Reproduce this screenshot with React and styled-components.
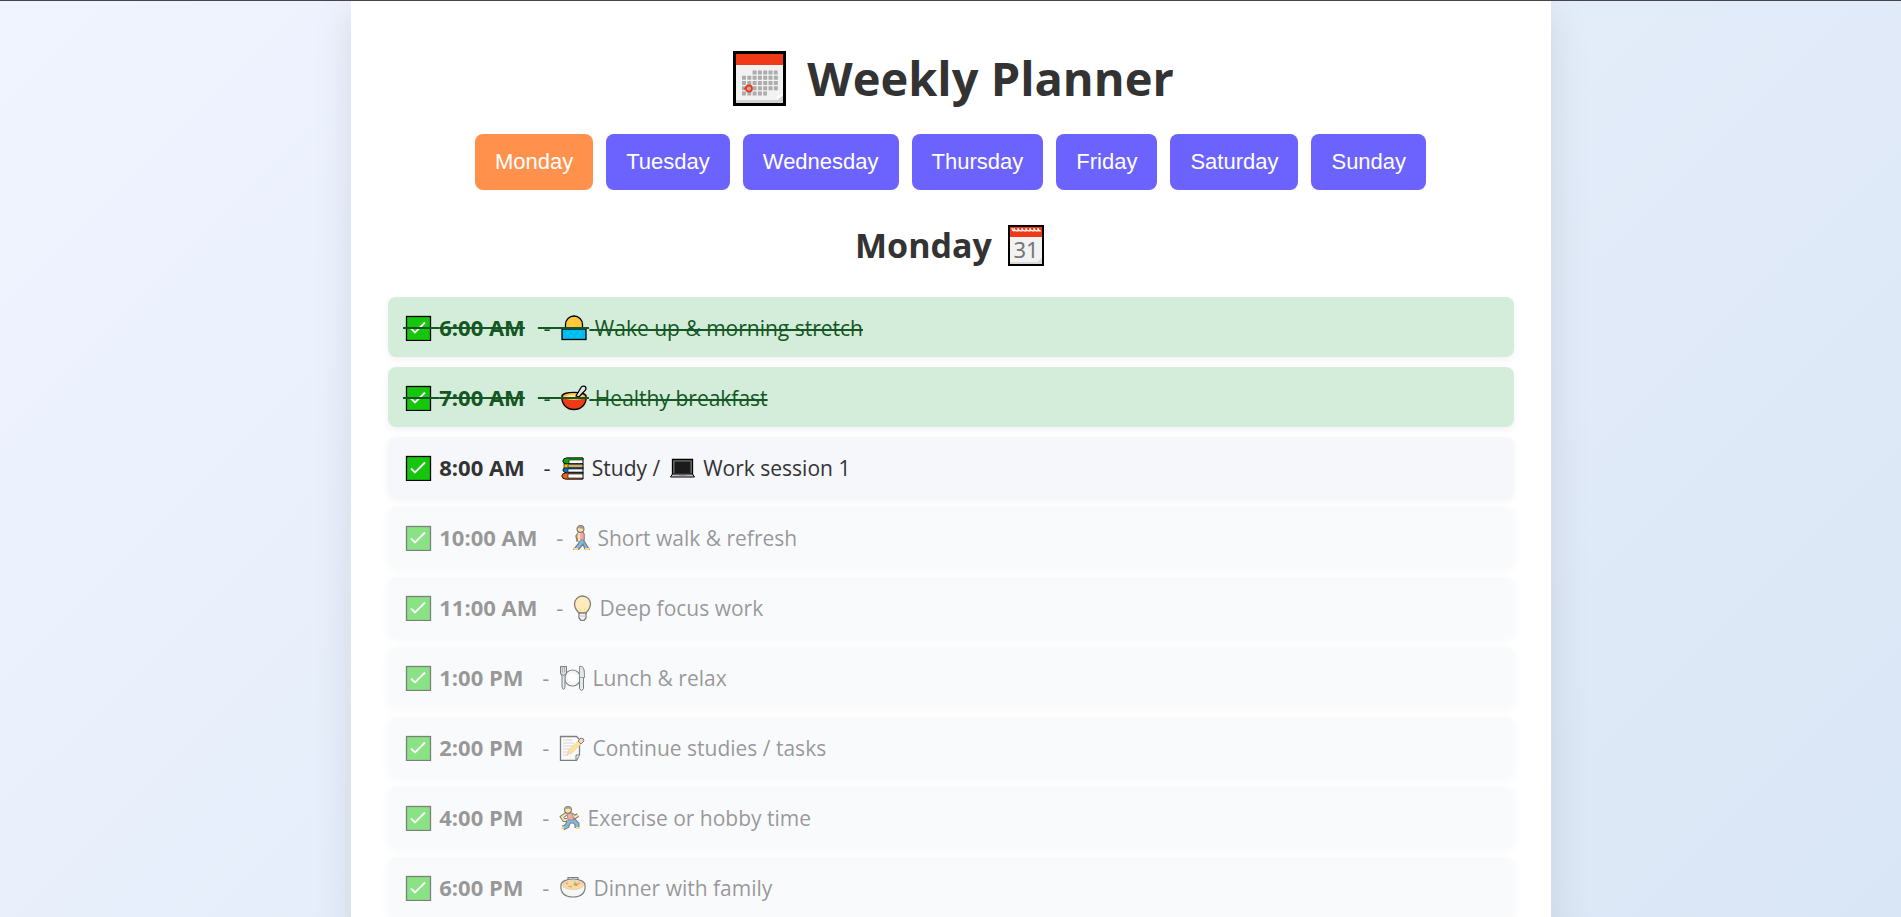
import React, { useState } from 'react'
import styled, { createGlobalStyle } from 'styled-components'

const days = ['Monday', 'Tuesday', 'Wednesday', 'Thursday', 'Friday', 'Saturday', 'Sunday']

const tasks = [
  { time: '6:00 AM', parts: [{ icon: 'sunrise', text: 'Wake up & morning stretch' }], status: 'done' },
  { time: '7:00 AM', parts: [{ icon: 'bowl', text: 'Healthy breakfast' }], status: 'done' },
  { time: '8:00 AM', parts: [{ icon: 'books', text: 'Study /' }, { icon: 'laptop', text: 'Work session 1' }], status: 'current' },
  { time: '10:00 AM', parts: [{ icon: 'walk', text: 'Short walk & refresh' }], status: 'locked' },
  { time: '11:00 AM', parts: [{ icon: 'bulb', text: 'Deep focus work' }], status: 'locked' },
  { time: '1:00 PM', parts: [{ icon: 'plate', text: 'Lunch & relax' }], status: 'locked' },
  { time: '2:00 PM', parts: [{ icon: 'memo', text: 'Continue studies / tasks' }], status: 'locked' },
  { time: '4:00 PM', parts: [{ icon: 'run', text: 'Exercise or hobby time' }], status: 'locked' },
  { time: '6:00 PM', parts: [{ icon: 'stew', text: 'Dinner with family' }], status: 'locked' },
]

const icons = {
  check: {
    width: 31,
    art: (
      <>
        <rect x="3.5" y="1.5" width="24" height="24" fill="#16c60c" stroke="#000" strokeWidth="1.3" />
        <path d="M8 13.5l4 4L22 7.5" fill="none" stroke="#fff" strokeWidth="1.8" />
      </>
    ),
  },
  sunrise: {
    width: 30,
    art: (
      <>
        <path d="M6.500 14V9.500a8.500 8.500 0 0 1 17 0V14z" fill="#ffc83d" stroke="#000" strokeWidth="1.3" />
        <rect x="3" y="14" width="24" height="10.500" fill="#00bcf2" stroke="#000" strokeWidth="1.3" />
        <path d="M8 18h2M14 17h2M20 18h2M11 21h2M18 21h2" stroke="#31d2f7" />
      </>
    ),
  },
  bowl: {
    width: 30,
    art: (
      <>
        <path d="M3 10.500c-1 8 4 14 12 14s13-6 12-14c-3-4-21-4-24 0z" fill="#f03a17" stroke="#000" strokeWidth="1.3" />
        <ellipse cx="15" cy="11.500" rx="11" ry="3.500" fill="#f9c23c" />
        <path d="M6 12c4-3 14-3 18 0-4 3-14 3-18 0z" fill="#ffe9a8" />
        <path d="M17 11l5-8.500c1-2 5-2 5 1 0 2-2 3-3 4l-4 4.500z" fill="#e6e6e6" stroke="#000" strokeWidth="1.3" />
      </>
    ),
  },
  books: {
    width: 27,
    art: (
      <>
        <path d="M24 3H8Q4 3 4 6t3 3h17zM24 9H7v4h17zM24 13H7Q4 13 4 15t4 3h16zM24 18H7Q3 18 3 21t4 3h17z" fill="#fff" stroke="#000" />
        <path d="M24 3H8Q4 3 4 6t4 3h2V5h14z" fill="#16a50c" stroke="#000" strokeWidth=".6" />
        <path d="M24 9H5v4h19v-1H9v-2h15z" fill="#fcb900" stroke="#000" strokeWidth=".6" />
        <path d="M24 13H7Q4 13 4 15t4 3h16v-1H9v-3h15z" fill="#0078d7" stroke="#000" strokeWidth=".6" />
        <path d="M24 18H7Q3 18 3 21t4 3h17v-1H9v-4h15z" fill="#f7630c" stroke="#000" strokeWidth=".6" />
      </>
    ),
  },
  laptop: {
    width: 32,
    art: (
      <>
        <path d="M6.500 4.500h20v15h-20z" fill="#767676" stroke="#000" strokeWidth="1.3" />
        <rect x="8.500" y="6.500" width="16" height="11.500" fill="#1b1b1b" />
        <path d="M6.500 19h20l2 3H4.500z" fill="#bebebe" stroke="#000" />
        <path d="M13 21h7" stroke="#777" />
      </>
    ),
  },
  walk: {
    width: 20,
    art: (
      <>
        <path d="M7 7l-3 4 1 5 2-1v3l-5 6h5l4-5 2 5h4l-5-8V9L10 6z" fill="#0078d7" stroke="#000" strokeWidth="1.300" />
        <path d="M7 7L4 11l2 4h6V9l-2-3z" fill="#ef5350" stroke="#000" strokeWidth=".7" />
        <path d="M7 8v8" stroke="#ffc83d" strokeWidth="2" />
        <circle cx="8.500" cy="4" r="3.400" fill="#ffc83d" stroke="#000" strokeWidth="1.300" />
        <path d="M5.500 3c1-3 6-3 6 1-2 0-3-1-6-1z" fill="#593a2b" />
        <path d="M2 24h4M13 24h4" stroke="#ffb900" strokeWidth="2" />
      </>
    ),
  },
  bulb: {
    width: 22,
    art: (
      <>
        <path d="M7 18C3 14 2.500 12 2.500 9a8 8 0 0 1 16 0c0 3-1 5-4.500 9z" fill="#ffd679" stroke="#000" strokeWidth="1.3" />
        <path d="M8 13l1 5h3l1-5" fill="none" stroke="#fcb900" />
        <path d="M7 18h7v5l-2 2.500H9L7 23z" fill="#e6e6e6" stroke="#000" strokeWidth="1.3" />
        <path d="M7 21h7" stroke="#888" />
      </>
    ),
  },
  plate: {
    width: 29,
    art: (
      <>
        <circle cx="14.500" cy="13" r="8" fill="#f2f2f2" stroke="#000" strokeWidth="1.2" />
        <circle cx="14.500" cy="13" r="5.500" fill="#fff" stroke="#ddd" strokeWidth=".7" />
        <path d="M2.500 1.500h6v7L7 11v11q-1.500 5-3 0V11L2.500 8.500z" fill="#b9d9eb" stroke="#000" />
        <path d="M2.500 1.500h6v7l-3 2-3-2z" fill="#bbb" stroke="#000" />
        <path d="M4.500 1.500v6M6.500 1.500v6" stroke="#444" strokeWidth=".7" />
        <path d="M21.500 1.500c4-1 5 3 5 11h-1v11q-2 4-4 0z" fill="#b9d9eb" stroke="#000" />
        <path d="M21.500 1.500c4-1 5 3 5 11h-5z" fill="#ccc" stroke="#000" strokeWidth=".7" />
      </>
    ),
  },
  memo: {
    width: 29,
    art: (
      <>
        <path d="M2.500 1.500h16l3 3v15l-3 6h-16z" fill="#f7f7f7" stroke="#000" strokeWidth="1.300" />
        <path d="M5 5h9M5 8h11M5 11h11M5 14h9M5 17h7M5 20h5" stroke="#aaa" />
        <path d="M18 25v-5h3.500" fill="#ddd" stroke="#000" />
        <path d="M9 20l2-5L22 4l3 3-11 11z" fill="#ffc83d" stroke="#d58a20" strokeWidth=".5" />
        <path d="M20 6l3-3q3 0 3 3l-3 3z" fill="#f5a9a0" stroke="#000" />
      </>
    ),
  },
  run: {
    width: 24,
    art: (
      <>
        <path d="M13 9l4 3 3-2M8 9l-4 3 2 3h3" fill="none" stroke="#000" strokeWidth="4" />
        <path d="M13 9l4 3 3-2M8 9l-4 3 2 3h3" fill="none" stroke="#ffc83d" strokeWidth="2" />
        <path d="M10 16h6l3 3v4M11 16l-2 5-4 2" fill="none" stroke="#000" strokeWidth="5" />
        <path d="M10 16h6l3 3v4M11 16l-2 5-4 2" fill="none" stroke="#0078d7" strokeWidth="2.800" />
        <path d="M9 8h5l2 7h-6z" fill="#ef5350" stroke="#000" strokeWidth=".7" />
        <circle cx="10" cy="5" r="3.400" fill="#ffc83d" stroke="#000" strokeWidth="1.2" />
        <path d="M6.500 4.500c0-4.500 7-4.500 7 0L10 3.500z" fill="#593a2b" />
        <path d="M3 24l3-2M18 23h4" stroke="#ffb900" strokeWidth="2" />
      </>
    ),
  },
  stew: {
    width: 30,
    art: (
      <>
        <path d="M10 5V2.500h10V5" fill="#ccc" stroke="#000" strokeWidth="1.200" />
        <path d="M3 10c-1 8 4 12 12 12s13-4 12-12c0-3-5-6-12-6S3 7 3 10z" fill="#eee" stroke="#000" strokeWidth="1.200" />
        <ellipse cx="15" cy="10" rx="10.500" ry="4.500" fill="#fcb93e" stroke="#b87518" strokeWidth=".5" />
        <path d="M8 9l2-1M12 12l2-1M20 8l2 1" stroke="#f03a17" strokeWidth="1.500" />
        <path d="M15 9q4-3 5 1-2 3-5-1z" fill="#7a4b1e" />
        <path d="M10 11l2 1M16 7h2" stroke="#16a50c" />
      </>
    ),
  },
}

// lead is blank space on the left that the strike line still crosses
const Icon = ({ name, struck, lead = 0 }) => {
  const { width, art } = icons[name]
  return (
    <Glyph width={width + lead} height="26" viewBox={`${-lead} 0 ${width + lead} 26`} aria-hidden="true">
      {art}
      {struck && <path d={`M${-lead} 13H${width}`} stroke="#155724" strokeWidth="2" />}
    </Glyph>
  )
}

const MonthCalendar = () => (
  <svg width="60" height="55" viewBox="-6 0 60 55" aria-hidden="true">
    <rect x="1.500" y="1.500" width="50" height="52" fill="#f2f2f2" stroke="#000" strokeWidth="3" />
    <path d="M3 3h47v11H3z" fill="#f03a17" />
    <path d="M3 49h42l5-5v8H3z" fill="#d2d2d2" />
    <path d="M44 49l6-5v-1l-6 2z" fill="#fff" />
    <path
      d="M19.600 21.500h25M9 26.800h36M9 32h36M9 37.200h36M9 42.500h25"
      stroke="#acacac"
      strokeWidth="4"
      strokeDasharray="4 1.300"
    />
    <circle cx="16" cy="37.500" r="3" fill="none" stroke="#f03a17" strokeWidth="1.800" />
    <path d="M11 38l4-3" stroke="#f03a17" strokeWidth="1.500" />
  </svg>
)

const DayCalendar = () => (
  <svg width="38" height="41" viewBox="0 0 38 41" aria-hidden="true">
    <rect x="1" y="1" width="34" height="39" fill="#f2f2f2" stroke="#000" strokeWidth="2" />
    <path d="M2 2h32v10H2z" fill="#f03a17" />
    <path d="M4 3q0 3 2 3V3q0 3 4 3V3q0 3 4 3V3q0 3 4 3V3q0 3 4 3V3q0 3 4 3V3q0 3 4 3V3q0 3 3 3" fill="none" stroke="#fff" strokeWidth="1.200" />
    <path d="M2 37h27l5-4v6H2z" fill="#d8d8d8" />
    <text x="18" y="33" textAnchor="middle" fill="#767676" fontSize="22" fontWeight="400" fontFamily="'Noto Sans', sans-serif">31</text>
  </svg>
)

const App = () => {
  const [active, setActive] = useState('Monday')

  return (
    <>
      <GlobalStyle />
      <Planner>
        <Title><MonthCalendar /> Weekly Planner</Title>
        <DayNav>
          {days.map((day) => (
            <DayButton key={day} type="button" $active={day === active} onClick={() => setActive(day)}>
              {day}
            </DayButton>
          ))}
        </DayNav>
        <DayTitle>{active} <DayCalendar /></DayTitle>
        <TaskList>
          {tasks.map(({ time, parts, status }) => (
            <Task key={time} $status={status}>
              <Time><Icon name="check" struck={status === 'done'} /> {time}</Time>
              {' - '}
              <Description>
                {parts.map(({ icon, text }, i) => (
                  <React.Fragment key={icon}>
                    <Icon name={icon} struck={status === 'done'} lead={i === 0 ? 3 : 0} /> {text}{' '}
                  </React.Fragment>
                ))}
              </Description>
            </Task>
          ))}
        </TaskList>
      </Planner>
    </>
  )
}

const GlobalStyle = createGlobalStyle`
* {
  box-sizing: border-box;
}

body {
  margin: 0;
  min-height: 100vh;
  border-top: 1px solid #46434f;
  background: linear-gradient(135deg, #f0f4ff, #d9e6f5);
  font-family: 'Open Sans', 'Noto Sans', sans-serif;
  color: #333;
}
`

const Planner = styled.main`
max-width: 1200px;
margin: 0 auto;
padding: 37px;
background: #fff;
box-shadow: 0 10px 38px rgba(0, 0, 0, 0.1);
`

const Title = styled.h1`
display: flex;
justify-content: center;
align-items: center;
gap: 20px;
margin: 0 0 16px;
font-size: 47px;
line-height: 80px;
`

const DayNav = styled.nav`
display: flex;
flex-wrap: wrap;
justify-content: center;
gap: 13px;
margin-bottom: 28px;
`

const DayButton = styled.button`
padding: 15px 20px;
border: none;
border-radius: 8px;
background: ${({ $active }) => ($active ? '#ff914d' : '#6c63ff')};
color: #fff;
font-family: 'Liberation Sans', Arial, sans-serif;
font-size: 22px;
line-height: 26px;
cursor: pointer;
`

const DayTitle = styled.h2`
display: flex;
justify-content: center;
align-items: center;
gap: 16px;
margin: 0 0 24px;
font-size: 34px;
line-height: 55px;
`

const TaskList = styled.ul`
display: flex;
flex-direction: column;
gap: 10px;
margin: 0;
padding: 0;
list-style: none;
`

const Task = styled.li`
padding: 15px;
border-radius: 8px;
background: ${({ $status }) => ($status === 'done' ? '#d4edda' : '#f5f7fb')};
color: ${({ $status }) => ($status === 'done' ? '#155724' : '#333')};
box-shadow: 0 3px 8px rgba(0, 0, 0, 0.05);
font-size: 22px;
line-height: 30px;
text-decoration: ${({ $status }) => ($status === 'done' ? 'line-through' : 'none')};
text-decoration-thickness: 2px;
opacity: ${({ $status }) => ($status === 'locked' ? 0.5 : 1)};
`

const Time = styled.strong`
margin-right: 13px;
`

const Description = styled.span`
font-size: 21px;
line-height: 28px;
`

const Glyph = styled.svg`
vertical-align: -5px;
`

export default App
